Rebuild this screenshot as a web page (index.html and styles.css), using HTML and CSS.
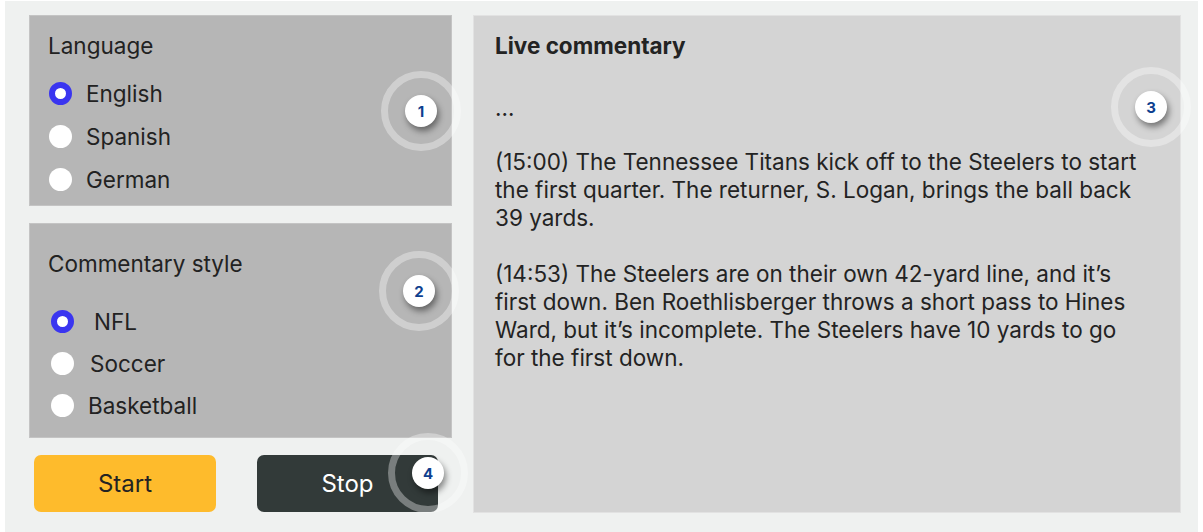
FILE: index.html
```html
<!DOCTYPE html>
<html lang="en">
<head>
<meta charset="utf-8">
<title>Live commentary</title>
<link rel="stylesheet" href="styles.css">
</head>
<body>
<div class="frame">
  <div class="left-col">
    <section class="panel panel-lang">
      <h2 class="panel-title">Language</h2>
      <ul class="radio-list">
        <li class="radio-item"><span class="radio selected"></span><span class="radio-label">English</span></li>
        <li class="radio-item"><span class="radio"></span><span class="radio-label">Spanish</span></li>
        <li class="radio-item"><span class="radio"></span><span class="radio-label">German</span></li>
      </ul>
    </section>
    <section class="panel panel-style">
      <h2 class="panel-title">Commentary style</h2>
      <ul class="radio-list radio-list-style">
        <li class="radio-item"><span class="radio selected"></span><span class="radio-label nfl">NFL</span></li>
        <li class="radio-item"><span class="radio"></span><span class="radio-label soccer">Soccer</span></li>
        <li class="radio-item"><span class="radio"></span><span class="radio-label">Basketball</span></li>
      </ul>
    </section>
    <div class="buttons">
      <button class="btn btn-start">Start</button>
      <button class="btn btn-stop">Stop</button>
    </div>
  </div>
  <section class="commentary">
    <h2 class="commentary-title">Live commentary</h2>
    <p class="ellipsis">…</p>
    <p class="para">(15:00) The Tennessee Titans kick off to the Steelers to start<br>the first quarter. The returner, S. Logan, brings the ball back<br>39 yards.</p>
    <p class="para">(14:53) The Steelers are on their own 42-yard line, and it’s<br>first down. Ben Roethlisberger throws a short pass to Hines<br>Ward, but it’s incomplete. The Steelers have 10 yards to go<br>for the first down.</p>
  </section>

  <div class="callout callout-1"><span class="badge">1</span></div>
  <div class="callout callout-2"><span class="badge">2</span></div>
  <div class="callout callout-3"><span class="badge">3</span></div>
  <div class="callout callout-4"><span class="badge">4</span></div>
</div>
</body>
</html>
```

FILE: styles.css
```css
* { box-sizing: border-box; }
html, body { margin: 0; padding: 0; background: #ffffff; }
body {
  font-family: Inter, "Open Sans", "Noto Sans", sans-serif;
  color: #232323;
}
.frame {
  position: relative;
  margin: 1px 0 0 5px;
  width: 1193px;
  height: 531px;
  background: #eff1f0;
  display: flex;
  gap: 21px;
  padding: 14px 17px 0 24px;
}
.left-col {
  width: 423px;
  display: flex;
  flex-direction: column;
}
.panel {
  background: #b6b6b6;
  border: 1px solid #c4c4c4;
  padding-left: 18px;
}
.panel-lang { height: 191px; padding-top: 16px; }
.panel-style { height: 215px; margin-top: 17px; padding-top: 26px; }
.panel-title {
  margin: 0;
  font-size: 22.5px;
  font-weight: 400;
  line-height: 28px;
  color: #222;
}
.radio-list {
  list-style: none;
  margin: 19px 0 0;
  padding: 0;
  display: flex;
  flex-direction: column;
  gap: 14px;
}
.radio-list-style { margin-top: 29px; gap: 13px; }
.radio-item {
  display: flex;
  align-items: center;
  height: 29px;
  font-size: 22.5px;
  line-height: 28px;
  color: #222;
}
.radio {
  width: 23px;
  height: 23px;
  border-radius: 50%;
  background: #ffffff;
  margin-left: 1px;
  flex: none;
}
.radio.selected { border: 6px solid #3a35f0; }
.radio-list-style .radio { margin-left: 3px; }
.radio-label { margin-left: 14px; }
.radio-label.nfl { margin-left: 20px; }
.radio-label.soccer { margin-left: 16px; }
.buttons {
  margin-top: 17px;
  height: 57px;
  display: flex;
  gap: 41px;
  padding-left: 5px;
}
.btn {
  width: 182px;
  height: 57px;
  border: none;
  border-radius: 7px;
  font-family: inherit;
  font-size: 24px;
  cursor: pointer;
}
.btn-start { background: #febb2c; color: #232323; }
.btn-stop { background: #323a39; color: #ffffff; width: 181px; }
.commentary {
  width: 708px;
  height: 498px;
  background: #d4d4d4;
  border: 1px solid #e2e2e2;
  padding: 16px 0 0 21px;
  font-size: 22.5px;
  line-height: 28px;
  color: #232323;
}
.commentary-title {
  margin: 0 0 34px;
  font-size: 22.5px;
  font-weight: 700;
  line-height: 28px;
}
.ellipsis { margin: 0 0 26px; }
.para { margin: 0 0 28px; }

.callout {
  position: absolute;
  width: 80px;
  height: 80px;
  border-radius: 50%;
  border: 7px solid rgba(255, 255, 255, 0.35);
  display: flex;
  align-items: center;
  justify-content: center;
}
.badge {
  width: 32px;
  height: 32px;
  border-radius: 50%;
  background: #ffffff;
  color: #0e3f8f;
  font-weight: 700;
  font-size: 15px;
  display: flex;
  align-items: center;
  justify-content: center;
  box-shadow: 2px 4px 6px rgba(0, 0, 0, 0.45);
}
.callout-1 { left: 376px; top: 70px; }
.callout-2 { left: 374px; top: 250px; }
.callout-3 { left: 1106px; top: 66px; }
.callout-4 { left: 383px; top: 432px; }
```
